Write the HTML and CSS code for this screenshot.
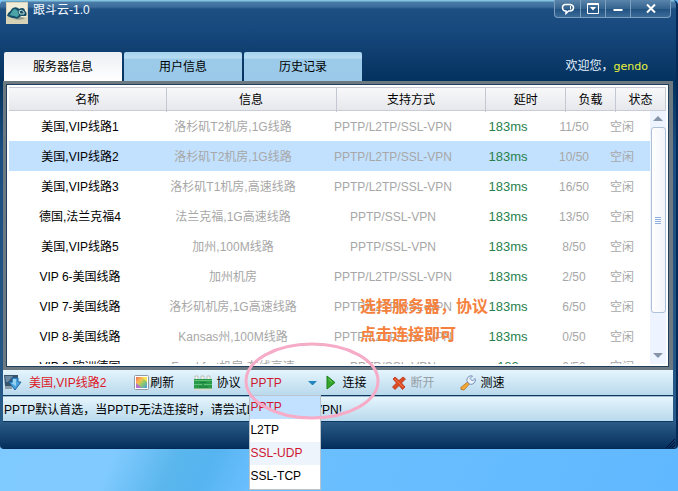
FILE: index.html
```html
<!DOCTYPE html>
<html lang="zh-CN">
<head>
<meta charset="utf-8">
<title>跟斗云-1.0</title>
<link rel="stylesheet" href="styles.css">
</head>
<body>
<main class="window">
  <header class="titlebar">
    <svg class="logo" viewBox="0 0 22 22" aria-hidden="true">
      <rect width="22" height="22" fill="#d9d3b8"/>
      <rect x="1" y="1" width="20" height="20" fill="#f0ecd8"/>
      <rect x="1" y="15" width="20" height="6" fill="#d6d0b4"/>
      <path d="M1 14C2 10 4 10 5 8C7 4 12 5 13 7C16 5 19 6 19 9C21 10 21 13 20 14L15 14L12 17L6 16Z" fill="#174e68"/>
      <path d="M3 13C6 12 5 8 9 7C12 8 12 10 13 13L11 15L8 14Z" fill="#4ba3a8"/>
      <path d="M8 17C12 18 17 18 19 16L14 15L11 17Z" fill="#8e9a92"/>
      <path d="M13 9Q16 7 18 10V12H14Z" fill="none" stroke="#bfe0dc"/>
    </svg>
    <h1 class="title">跟斗云-1.0</h1>
    <div class="controls">
      <button type="button" aria-label="反馈"><svg width="14" height="12" viewBox="0 0 14 12"><path d="M4 1.500H9Q12.500 2 12.500 4.500Q12.500 7.500 9.500 8H7.500L5 10.500V8H4Q1.500 7.500 1.500 4.500Q1.500 2 4 1.500Z" fill="none" stroke="#fff" stroke-width="1.500"/><path d="M9.500 3V6.500" stroke="#fff"/></svg></button>
      <button type="button" aria-label="菜单"><svg width="12" height="11" viewBox="0 0 12 11"><path d="M.5.5H11.500V10.500H.5ZM.5 1.500H11.500" fill="none" stroke="#fff"/><path d="M3 4H9L6 7.500Z" fill="#fff"/></svg></button>
      <button type="button" aria-label="最小化"><svg width="12" height="11" viewBox="0 0 12 11"><path d="M1.500 7H10.500" stroke="#fff" stroke-width="2"/></svg></button>
      <button type="button" class="close" aria-label="关闭"><svg width="12" height="11" viewBox="0 0 12 11"><path d="M2 1.500L10 9.500M10 1.500L2 9.500" stroke="#fff" stroke-width="2"/></svg></button>
    </div>
  </header>

  <div class="tabrow">
    <nav class="tabs" role="tablist">
      <button type="button" role="tab" aria-selected="true" class="tab active">服务器信息</button>
      <button type="button" role="tab" aria-selected="false" class="tab">用户信息</button>
      <button type="button" role="tab" aria-selected="false" class="tab">历史记录</button>
    </nav>
    <p class="welcome">欢迎您，<span class="user">gendo</span></p>
  </div>

  <section class="frame">
    <div class="panel">
      <table class="servers">
        <thead>
          <tr><th>名称</th><th>信息</th><th>支持方式</th><th>延时</th><th>负载</th><th>状态</th></tr>
        </thead>
        <tbody>
          <tr><td>美国,VIP线路1</td><td>洛杉矶T2机房,1G线路</td><td>PPTP/L2TP/SSL-VPN</td><td>183ms</td><td>11/50</td><td>空闲</td></tr>
          <tr class="selected"><td>美国,VIP线路2</td><td>洛杉矶T2机房,1G线路</td><td>PPTP/L2TP/SSL-VPN</td><td>183ms</td><td>10/50</td><td>空闲</td></tr>
          <tr><td>美国,VIP线路3</td><td>洛杉矶T1机房,高速线路</td><td>PPTP/L2TP/SSL-VPN</td><td>183ms</td><td>16/50</td><td>空闲</td></tr>
          <tr><td>德国,法兰克福4</td><td>法兰克福,1G高速线路</td><td>PPTP/SSL-VPN</td><td>183ms</td><td>13/50</td><td>空闲</td></tr>
          <tr><td>美国,VIP线路5</td><td>加州,100M线路</td><td>PPTP/SSL-VPN</td><td>183ms</td><td>8/50</td><td>空闲</td></tr>
          <tr><td>VIP 6-美国线路</td><td>加州机房</td><td>PPTP/L2TP/SSL-VPN</td><td>183ms</td><td>2/50</td><td>空闲</td></tr>
          <tr><td>VIP 7-美国线路</td><td>洛杉矶机房,1G高速线路</td><td>PPTP/L2TP/SSL-VPN</td><td>183ms</td><td>6/50</td><td>空闲</td></tr>
          <tr><td>VIP 8-美国线路</td><td>Kansas州,100M线路</td><td>PPTP/L2TP/SSL-VPN</td><td>183ms</td><td>0/50</td><td>空闲</td></tr>
          <tr><td>VIP 9-欧洲德国</td><td>Frankfurt机房,在线高速</td><td>PPTP/SSL-VPN</td><td>183</td><td>0/50</td><td>空闲</td></tr>
        </tbody>
      </table>
      <div class="scrollbar">
        <svg class="arrow" width="10" height="6" viewBox="0 0 10 6" aria-hidden="true"><path d="M5 0L10 5H0Z" fill="#8795ab"/></svg>
        <div class="thumb"><i></i><i></i><i></i><i></i></div>
        <svg class="arrow" width="10" height="6" viewBox="0 0 10 6" aria-hidden="true"><path d="M0 0H10L5 5Z" fill="#8795ab"/></svg>
      </div>
      <p class="hint">选择服务器，协议<br>点击连接即可</p>
    </div>
  </section>

  <section class="toolbar">
    <div class="current">
      <svg width="18" height="17" viewBox="0 0 18 17" aria-hidden="true"><path d="M0 1H14V5L11 12H1Z" fill="#38536c"/><path d="M1 2H9L4 8H2Z" fill="#6c8ba4"/><path d="M1 12H8V15H1Z" fill="#8b9ba8"/><path d="M8 4H14V8H17L11 16L5 8H8Z" fill="#4ba3dd" stroke="#1e66a4"/><path d="M9 5H12V12L7 9H9Z" fill="#95d2f2"/></svg>
      <span>美国,VIP线路2</span>
    </div>
    <button type="button" class="tool refresh">
      <svg width="15" height="15" viewBox="0 0 15 15" aria-hidden="true"><defs><linearGradient id="hue" x1="0" y1="0" x2="1" y2="1"><stop offset="0" stop-color="#ef6a62"/><stop offset=".35" stop-color="#f9c04e"/><stop offset=".6" stop-color="#8ecb67"/><stop offset="1" stop-color="#4a98e8"/></linearGradient></defs><rect x=".5" y=".5" width="14" height="14" rx="1" fill="#fff" stroke="#8f9aa5"/><rect x="2" y="2" width="11" height="11" fill="url(#hue)"/><path d="M2 8V13H8Z" fill="#b573cd"/><path d="M8 2H13V7Z" fill="#f7e45d"/></svg>
      <span>刷新</span>
    </button>
    <div class="protocol">
      <svg width="18" height="17" viewBox="0 0 18 17" aria-hidden="true"><path d="M1 5V2H4V5M7 5V2H10V5M13 5V2H16V5" fill="#f4f6f2" stroke="#b9c2bb"/><rect y="5" width="18" height="10" fill="#299a49"/><path d="M0 6.500H18M0 10.500H8M10 10.500H18" stroke="#62c078"/><path d="M6 8.500H12M5 13H14" stroke="#1a7c3b"/><path d="M0 15.500H18" stroke="#d8ddd2" stroke-width="2"/></svg>
      <label for="proto">协议</label>
      <div class="combo">
        <select id="proto"><option>PPTP</option><option>L2TP</option><option>SSL-UDP</option><option>SSL-TCP</option></select>
        <svg class="caret" width="9" height="5" viewBox="0 0 9 5" aria-hidden="true"><path d="M0 0H9L5 4H4Z" fill="#2684bd"/></svg>
        <ul class="menu" role="listbox" aria-label="协议">
          <li role="option" aria-selected="true" class="chosen">PPTP</li>
          <li role="option" aria-selected="false">L2TP</li>
          <li role="option" aria-selected="false" class="hover">SSL-UDP</li>
          <li role="option" aria-selected="false">SSL-TCP</li>
        </ul>
        <svg class="ring" width="138" height="80" viewBox="0 0 138 80" aria-hidden="true"><ellipse cx="69" cy="40" rx="66" ry="37" fill="none" stroke="#f6abc7" stroke-width="3"/></svg>
      </div>
    </div>
    <button type="button" class="tool connect">
      <svg width="10" height="15" viewBox="0 0 10 15" aria-hidden="true"><path d="M1 1L9 7.500L1 14Z" fill="#35a52a" stroke="#18811b"/><path d="M2.500 4L6 7" stroke="#7bd168"/></svg>
      <span>连接</span>
    </button>
    <button type="button" class="tool disconnect" disabled>
      <svg width="14" height="14" viewBox="0 0 14 14" aria-hidden="true"><path d="M3 1L7 4.500L11 1L13.500 3L9.500 7L13 11L10.500 13.500L7 9.500L3 13.500L.5 11L4.500 7L1 3Z" fill="#dd4b23" stroke="#b7351a" stroke-width=".8"/><path d="M3 3L11 11" stroke="#f0744a"/></svg>
      <span>断开</span>
    </button>
    <button type="button" class="tool speed">
      <svg width="16" height="16" viewBox="0 0 16 16" aria-hidden="true"><path d="M7.500 7L9.500 9L4 15L1 14.500L.8 12.500Z" fill="#f3a735" stroke="#a9702b" stroke-width=".8"/><path d="M12.500 1L10 3.500L12.500 6L15 3.500C16.500 7 12.500 10.500 9.500 9L7.500 7C5.500 3.500 9 0 12.500 1Z" fill="#e9f1fa" stroke="#718fb8"/></svg>
      <span>测速</span>
    </button>
  </section>

  <p class="status">PPTP默认首选，当PPTP无法连接时，请尝试L2TP或SSL-VPN!</p>
  <footer class="foot">
    <svg width="9" height="9" viewBox="0 0 9 9" aria-hidden="true"><path d="M0 9L9 0M3 9L9 3M6 9L9 6" stroke="#020c38"/></svg>
  </footer>
</main>
</body>
</html>
```

FILE: styles.css
```css
* {
  box-sizing: border-box;
}

body {
  margin: 0;
  min-height: 100vh;
  font: 12px/16px "Liberation Sans", "Noto Sans CJK SC", sans-serif;
  color: #000;
  background: linear-gradient(115deg, #7cc8ff 0, #80caff 36%, #5ab6ec 43%, #56b4f0 47%, #6cc0ff 53%, #60b8ff 100%);
  overflow: hidden;
}

h1, p, ul {
  margin: 0;
  padding: 0;
  font-size: 12px;
  font-weight: normal;
}

button, select {
  margin: 0;
  padding: 0;
  border: 0;
  background: none;
  font: inherit;
  color: inherit;
}

svg {
  display: block;
  flex: none;
}

.window {
  border: solid #062a58;
  border-width: 0 2px 1px 0;
  border-radius: 5px 5px 4px 4px;
  padding: 0 3px;
  background: linear-gradient(#82c3df 0, #82c3df 1px, #4b7ca8 2px, #3c6c9b 7px, #1d4f83 9px, #194a7f 26px, #04325f 81px, #1b4f81 150px, #285b88 100%);
}

.titlebar {
  display: flex;
  align-items: flex-start;
  height: 52px;
  padding: 0 2px 0 3px;
}

.logo {
  width: 22px;
  height: 22px;
  margin-top: 2px;
}

.title {
  margin: 2px auto 0 5px;
  color: #f4faff;
}

.controls {
  display: flex;
  height: 18px;
  border: 1px solid #7c9fbe;
  border-top: 0;
  border-radius: 0 0 4px 4px;
  background: linear-gradient(#5a84ab, #35648f 50%, #205080 51%, #3a6b99);
  overflow: hidden;
}

.controls button {
  display: grid;
  place-items: center;
  width: 25px;
}

.controls button + button {
  border-left: 1px solid #7c9fbe;
}

.controls .close {
  width: 40px;
}

.tabrow {
  display: flex;
  justify-content: space-between;
  padding: 0 25px 0 1px;
}

.tabs {
  display: flex;
  gap: 2px;
}

.tab {
  width: 118px;
  height: 29px;
  border-radius: 2px 2px 0 0;
  background: linear-gradient(#a7d3ee 0, #b7dcf2 6px, #9ccbea 7px, #9ac9e9);
}

.tab.active {
  background: linear-gradient(#eceff4, #fff);
}

.welcome {
  padding-top: 6px;
  color: #e4f4ff;
}

.user {
  font: 11px "DejaVu Sans", sans-serif;
  color: #e8f23c;
}

.frame {
  padding: 3px 4px 3px 3px;
  background: #6d7980;
}

.panel {
  position: relative;
  padding: 2px;
  border: 1px solid #203f5e;
  background: #fff;
}

.servers {
  display: block;
}

.servers thead, .servers tbody {
  display: block;
}

.servers tr {
  display: grid;
}

.servers thead tr {
  grid-template-columns: 158fr 170fr 150fr 80fr 50fr 50fr;
  height: 24px;
  border: solid #c9ccd6;
  border-width: 1px 0;
  background: linear-gradient(#f8f8fa, #e6e8ec);
}

.servers th {
  padding: 0;
  border-right: 1px solid #c3c8d2;
  font-weight: normal;
  line-height: 24px;
}

.servers tbody {
  height: 253px;
  overflow: hidden;
}

.servers tbody tr {
  grid-template-columns: 142fr 164fr 156fr 74fr 58fr 38fr;
  height: 30px;
  margin-right: 15px;
  padding-right: 10px;
}

.servers td {
  padding: 0;
  line-height: 32px;
  text-align: center;
  white-space: nowrap;
  color: #a7a7a7;
}

.servers td:first-child {
  color: #000;
}

.servers td:nth-child(4) {
  color: #28804d;
  font-size: 13px;
}

.servers .selected {
  background: #c2e1ff;
}

.scrollbar {
  position: absolute;
  top: 26px;
  right: 2px;
  bottom: 2px;
  width: 16px;
  display: flex;
  flex-direction: column;
  align-items: center;
  background: #edf3ff;
}

.arrow {
  margin: 5px 0;
}

.thumb {
  display: flex;
  flex-direction: column;
  align-items: center;
  justify-content: center;
  gap: 1px;
  width: 15px;
  height: 186px;
  margin-bottom: auto;
  border: 1px solid #adc0d8;
  border-radius: 3px;
  background: linear-gradient(90deg, #fff, #f1f4fa);
}

.thumb i {
  width: 6px;
  height: 1px;
  background: #8fb0de;
}

.hint {
  position: absolute;
  top: 208px;
  left: 353px;
  font-size: 16px;
  font-weight: bold;
  line-height: 28px;
  color: #f5813c;
}

.toolbar, .status {
  height: 26px;
  border-bottom: 1px solid #0c3962;
  background: linear-gradient(#e5f5fd, #b9d9ec);
}

.toolbar {
  display: flex;
  align-items: center;
  padding-left: 1px;
}

.current, .tool, .protocol {
  display: flex;
  align-items: center;
  white-space: nowrap;
}

.current {
  gap: 7px;
  color: #dd1626;
}

.refresh {
  gap: 1px;
  margin-left: 28px;
}

.protocol {
  gap: 4px;
  margin-left: 20px;
}

.combo {
  position: relative;
  width: 72px;
  margin-left: 5px;
}

.combo select {
  appearance: none;
  display: block;
  width: 100%;
  height: 25px;
  padding-left: 1px;
  color: #cf1730;
}

.caret {
  position: absolute;
  top: 11px;
  right: 4px;
  pointer-events: none;
}

.menu {
  position: absolute;
  top: 25px;
  left: 0;
  width: 72px;
  padding-bottom: 1px;
  border: 1px solid #b9c4cd;
  background: #fff;
  list-style: none;
}

.menu li {
  line-height: 23px;
}

.menu .chosen {
  color: #cf1730;
  background: #c2e0ff;
}

.menu .hover {
  color: #cf1730;
  background: #edf4fc;
}

.ring {
  position: absolute;
  top: -29px;
  left: -6px;
  pointer-events: none;
}

.connect {
  gap: 6px;
  margin-left: 5px;
}

.disconnect {
  gap: 4px;
  margin-left: 26px;
  color: #969fa6;
}

.speed {
  gap: 4px;
  margin-left: 26px;
}

.status {
  padding-left: 1px;
  border-top: 1px solid #9fb8ca;
  line-height: 26px;
  white-space: nowrap;
}

.foot {
  display: flex;
  align-items: flex-end;
  justify-content: flex-end;
  height: 26px;
  margin: 0 -3px;
  padding-right: 1px;
  border-radius: 0 0 4px 4px;
  background: linear-gradient(#2c5b87, #04305d);
}
```
